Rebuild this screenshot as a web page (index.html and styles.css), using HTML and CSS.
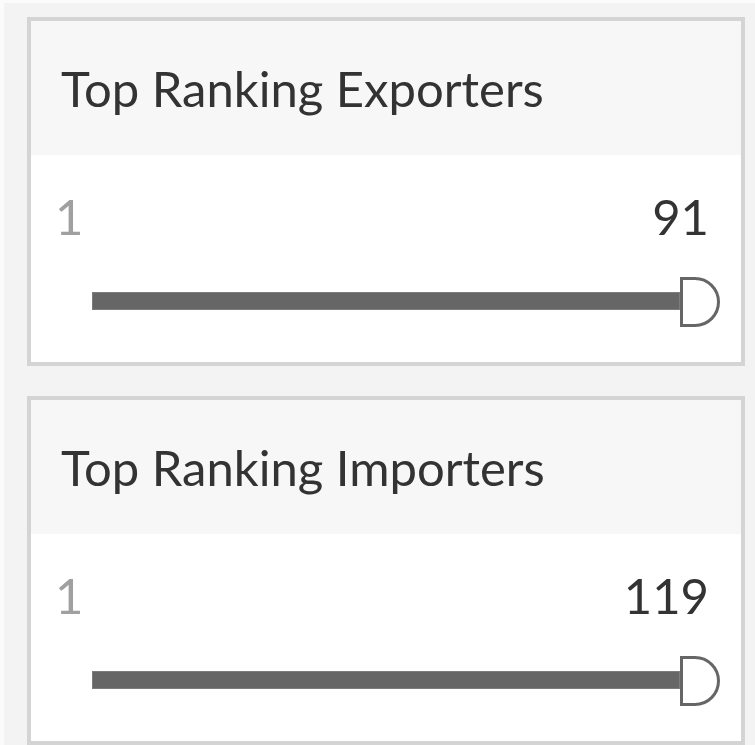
FILE: index.html
```html
<!DOCTYPE html>
<html lang="en">
<head>
<meta charset="utf-8">
<title>Top Ranking Filters</title>
<link rel="stylesheet" href="styles.css">
</head>
<body>
<div class="page">
  <section class="card">
    <div class="card-header"><h2 class="title">Top Ranking Exporters</h2></div>
    <div class="card-body">
      <div class="range">
        <span class="min">1</span>
        <span class="max">91</span>
      </div>
      <div class="slider">
        <div class="track"></div>
        <svg class="handle" width="40" height="50" viewBox="0 0 40 50" aria-hidden="true">
          <path d="M1.5 1.5 H15 A23.5 23.5 0 0 1 15 48.5 H1.5 Z" fill="#fff" stroke="#666" stroke-width="3"/>
        </svg>
      </div>
    </div>
  </section>
  <section class="card">
    <div class="card-header"><h2 class="title">Top Ranking Importers</h2></div>
    <div class="card-body">
      <div class="range">
        <span class="min">1</span>
        <span class="max">119</span>
      </div>
      <div class="slider">
        <div class="track"></div>
        <svg class="handle" width="40" height="50" viewBox="0 0 40 50" aria-hidden="true">
          <path d="M1.5 1.5 H15 A23.5 23.5 0 0 1 15 48.5 H1.5 Z" fill="#fff" stroke="#666" stroke-width="3"/>
        </svg>
      </div>
    </div>
  </section>
</div>
</body>
</html>
```
FILE: styles.css
```css
html {
  background: #fbfbfb;
}
body {
  margin: 3px 0 0 4px;
  background: #f3f3f3;
  min-height: 742px;
  font-family: Lato, "Liberation Sans", sans-serif;
}
.page {
  display: flex;
  flex-direction: column;
  gap: 30px;
  padding: 14px 10px 0 23px;
}
.card {
  border: 4px solid #d4d4d4;
  background: #fff;
}
.card-header {
  background: #f7f7f7;
  padding: 38px 30px 38px;
}
.title {
  margin: 0;
  font-weight: 400;
  font-size: 49px;
  line-height: 58px;
  color: #333;
}
.card-body {
  padding: 32px 21px 35px 24px;
}
.range {
  display: flex;
  justify-content: space-between;
  font-size: 49px;
  line-height: 58px;
  padding-right: 11px;
}
.min {
  color: #a0a0a0;
}
.max {
  color: #333;
}
.slider {
  display: flex;
  align-items: center;
  margin-top: 32px;
  padding-left: 37px;
}
.track {
  flex: 1;
  height: 16px;
  background: #666;
  border: 1px solid #7c7c7c;
  margin-bottom: 3px;
}
.handle {
  display: block;
  flex: none;
}
```
